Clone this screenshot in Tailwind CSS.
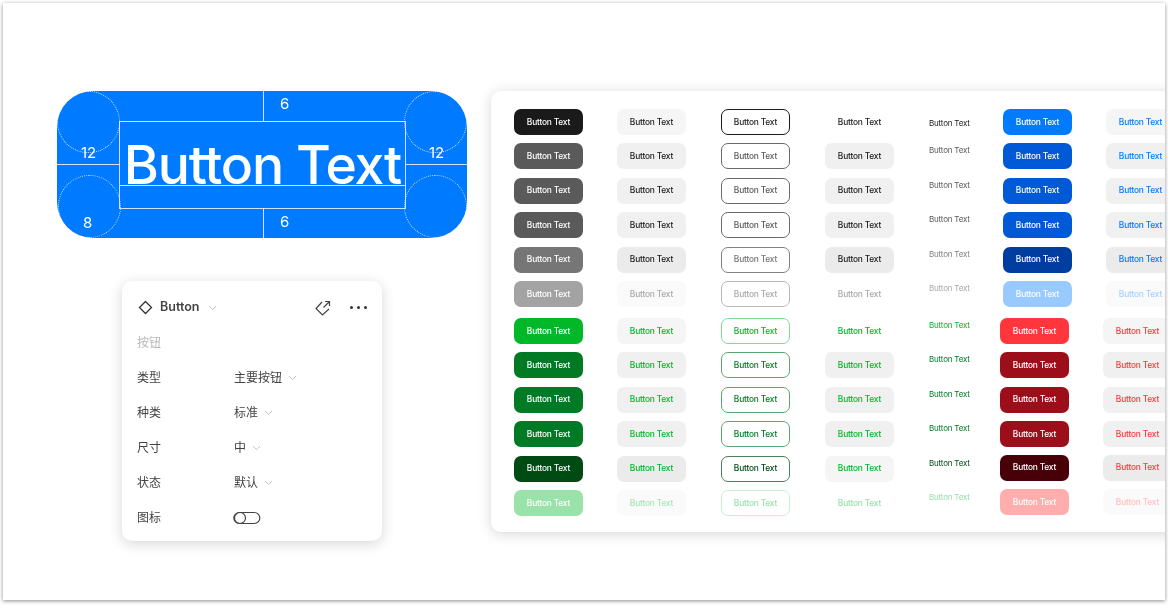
<!DOCTYPE html>
<html lang="zh"><head><meta charset="utf-8">
<script src="https://cdn.jsdelivr.net/npm/@tailwindcss/browser@4"></script>
</head>
<body class="bg-white">
<div class="h-[609px] w-[1168px] overflow-hidden pt-[3px] pl-[3px] font-['Inter','Noto_Sans_CJK_SC',sans-serif]">
<div class="flex h-[597px] w-[1162px] overflow-hidden bg-white pt-[88px] pl-[54px] shadow-[0_1px_4px_rgba(0,0,0,0.45)] blur-[0.45px]">

<!-- left column -->
<div class="flex w-[434px] flex-none flex-col">
  <div class="relative flex h-[147px] w-[410px] flex-none flex-col rounded-[36px] bg-[#007aff] text-white">
    <div class="flex h-[30px] justify-center pl-[2px]"><div class="w-px bg-white/80"></div></div>
    <div class="flex h-[87px] items-center">
      <div class="h-px w-[62px] flex-none bg-white/80"></div>
      <div class="relative flex h-[88px] w-[287px] flex-none justify-center border border-white/80 pt-[9px] text-[53.5px] leading-[68px] font-medium tracking-[-1.2px] whitespace-nowrap">Button Text
        <div class="absolute top-[63px] right-0 left-0 h-px bg-white/80"></div>
      </div>
      <div class="h-px flex-1 bg-white/80"></div>
    </div>
    <div class="flex h-[30px] justify-center pl-[2px]"><div class="w-px bg-white/80"></div></div>
    <div class="absolute top-0 left-0 h-[62px] w-[63px] rounded-full border border-dotted border-white/80"></div>
    <div class="absolute top-0 right-0 h-[62px] w-[63px] rounded-full border border-dotted border-white/80"></div>
    <div class="absolute bottom-0 left-[1px] h-[63px] w-[63px] rounded-full border border-dotted border-white/80"></div>
    <div class="absolute right-0 bottom-0 h-[63px] w-[63px] rounded-full border border-dotted border-white/80"></div>
    <span class="absolute top-[4px] left-[223px] text-[15px] leading-[18px]">6</span>
    <span class="absolute top-[122px] left-[223px] text-[15px] leading-[18px]">6</span>
    <span class="absolute top-[53px] left-[24px] text-[15px] leading-[18px]">12</span>
    <span class="absolute top-[53px] left-[372px] text-[15px] leading-[18px]">12</span>
    <span class="absolute top-[123px] left-[26px] text-[15px] leading-[18px]">8</span>
  </div>

  <div class="mt-[43px] ml-[65px] h-[260px] w-[260px] flex-none rounded-[10px] bg-white px-[15px] pt-[16.5px] text-[12px] text-[#444] shadow-[0_3px_14px_rgba(0,0,0,0.16)]">
    <div class="flex h-[20px] items-center">
      <svg class="mr-[7px] ml-[1px] h-[15px] w-[15px]" viewBox="0 0 15 15" fill="none" stroke="#333" stroke-width="1.3"><path d="M7.5 1.5 13.5 7.5 7.5 13.5 1.5 7.5Z"/></svg>
      <span class="text-[12.5px] font-semibold text-[#444]">Button</span>
      <svg class="ml-[9px] h-[6px] w-[9px]" viewBox="0 0 9 6" fill="none" stroke="#c4c4c4" stroke-width="1"><path d="M1 1 4.5 4.5 8 1"/></svg>
      <svg class="mr-[18px] ml-auto h-[18px] w-[18px]" viewBox="0 0 18 18" fill="none" stroke="#444" stroke-width="1.2"><path d="M8 3 2 9.5 8.5 16 15 10"/><path d="M9.5 8.5 15.5 2.5M11 2.5h4.5V7"/></svg>
      <div class="flex gap-[3.5px]"><i class="h-[3.5px] w-[3.5px] rounded-full bg-[#333]"></i><i class="h-[3.5px] w-[3.5px] rounded-full bg-[#333]"></i><i class="h-[3.5px] w-[3.5px] rounded-full bg-[#333]"></i></div>
    </div>
    <div class="mt-[15.5px] flex h-[20px] items-center text-[#b8b8b8]">按钮</div>
    <div class="mt-[15px] flex h-[20px] items-center"><span class="w-[97px]">类型</span>主要按钮<svg class="ml-[6px] h-[6px] w-[9px]" viewBox="0 0 9 6" fill="none" stroke="#c4c4c4" stroke-width="1"><path d="M1 1 4.5 4.5 8 1"/></svg></div>
    <div class="mt-[15px] flex h-[20px] items-center"><span class="w-[97px]">种类</span>标准<svg class="ml-[6px] h-[6px] w-[9px]" viewBox="0 0 9 6" fill="none" stroke="#c4c4c4" stroke-width="1"><path d="M1 1 4.5 4.5 8 1"/></svg></div>
    <div class="mt-[15px] flex h-[20px] items-center"><span class="w-[97px]">尺寸</span>中<svg class="ml-[6px] h-[6px] w-[9px]" viewBox="0 0 9 6" fill="none" stroke="#c4c4c4" stroke-width="1"><path d="M1 1 4.5 4.5 8 1"/></svg></div>
    <div class="mt-[15px] flex h-[20px] items-center"><span class="w-[97px]">状态</span>默认<svg class="ml-[6px] h-[6px] w-[9px]" viewBox="0 0 9 6" fill="none" stroke="#c4c4c4" stroke-width="1"><path d="M1 1 4.5 4.5 8 1"/></svg></div>
    <div class="mt-[15px] flex h-[20px] items-center"><span class="w-[96px]">图标</span>
      <svg class="h-[14px] w-[28px]" viewBox="0 0 28 14" fill="none" stroke="#444" stroke-width="1.2"><rect x="0.8" y="1.5" width="26" height="11" rx="5.5"/><circle cx="7" cy="7" r="5.5"/></svg>
    </div>
  </div>
</div>

<!-- buttons card -->
<div class="grid h-[441px] w-[720px] flex-none grid-cols-[103px_104px_104px_104px_74px_103px_69px] rounded-[10px] bg-white pt-[18px] pl-[23px] text-[8.4px] font-medium tracking-[-0.2px] shadow-[0_2px_14px_rgba(0,0,0,0.16)]">

  <div class="flex w-[69px] flex-col gap-[11px]">
    <div class="flex flex-col gap-[8.4px] text-white *:flex *:h-[26px] *:items-center *:justify-center *:rounded-[7px]">
      <div class="bg-[#1a1a1a]">Button Text</div><div class="bg-[#5a5a5a]">Button Text</div><div class="bg-[#5a5a5a]">Button Text</div><div class="bg-[#5a5a5a]">Button Text</div><div class="bg-[#767676]">Button Text</div><div class="bg-[#a3a3a3]">Button Text</div>
    </div>
    <div class="flex flex-col gap-[8.4px] text-white *:flex *:h-[26px] *:items-center *:justify-center *:rounded-[7px]">
      <div class="bg-[#00b828]">Button Text</div><div class="bg-[#007a24]">Button Text</div><div class="bg-[#007a24]">Button Text</div><div class="bg-[#007a24]">Button Text</div><div class="bg-[#004a14]">Button Text</div><div class="bg-[#99e2a9]">Button Text</div>
    </div>
  </div>

  <div class="flex w-[69px] flex-col gap-[11px]">
    <div class="flex flex-col gap-[8.4px] text-[#1a1a1a] *:flex *:h-[26px] *:items-center *:justify-center *:rounded-[7px]">
      <div class="bg-[#f5f5f5]">Button Text</div><div class="bg-[#f0f0f0]">Button Text</div><div class="bg-[#f0f0f0]">Button Text</div><div class="bg-[#f0f0f0]">Button Text</div><div class="bg-[#ebebeb]">Button Text</div><div class="bg-[#fafafa] text-[#a8a8a8]">Button Text</div>
    </div>
    <div class="flex flex-col gap-[8.4px] text-[#00b828] *:flex *:h-[26px] *:items-center *:justify-center *:rounded-[7px]">
      <div class="bg-[#f5f5f5]">Button Text</div><div class="bg-[#f0f0f0]">Button Text</div><div class="bg-[#f0f0f0]">Button Text</div><div class="bg-[#f0f0f0]">Button Text</div><div class="bg-[#ebebeb]">Button Text</div><div class="bg-[#fafafa] text-[#a6e6b4]">Button Text</div>
    </div>
  </div>

  <div class="flex w-[69px] flex-col gap-[11px]">
    <div class="flex flex-col gap-[8.4px] *:flex *:h-[26px] *:items-center *:justify-center *:rounded-[7px] *:border">
      <div class="border-[#1a1a1a] text-[#1a1a1a]">Button Text</div><div class="border-[#6a6a6a] text-[#5a5a5a]">Button Text</div><div class="border-[#6a6a6a] text-[#5a5a5a]">Button Text</div><div class="border-[#6a6a6a] text-[#5a5a5a]">Button Text</div><div class="border-[#808080] text-[#767676]">Button Text</div><div class="border-[#b8b8b8] text-[#a8a8a8]">Button Text</div>
    </div>
    <div class="flex flex-col gap-[8.4px] *:flex *:h-[26px] *:items-center *:justify-center *:rounded-[7px] *:border">
      <div class="border-[#80dc94] text-[#00b828]">Button Text</div><div class="border-[#5aa870] text-[#007a24]">Button Text</div><div class="border-[#5aa870] text-[#007a24]">Button Text</div><div class="border-[#5aa870] text-[#007a24]">Button Text</div><div class="border-[#4a7f5a] text-[#004a14]">Button Text</div><div class="border-[#c8f0d2] text-[#99e2a9]">Button Text</div>
    </div>
  </div>

  <div class="flex w-[69px] flex-col gap-[11px]">
    <div class="flex flex-col gap-[8.4px] text-[#1a1a1a] *:flex *:h-[26px] *:items-center *:justify-center *:rounded-[7px]">
      <div>Button Text</div><div class="bg-[#f0f0f0]">Button Text</div><div class="bg-[#f0f0f0]">Button Text</div><div class="bg-[#f0f0f0]">Button Text</div><div class="bg-[#ebebeb]">Button Text</div><div class="text-[#a8a8a8]">Button Text</div>
    </div>
    <div class="flex flex-col gap-[8.4px] text-[#00b828] *:flex *:h-[26px] *:items-center *:justify-center *:rounded-[7px]">
      <div>Button Text</div><div class="bg-[#f0f0f0]">Button Text</div><div class="bg-[#f0f0f0]">Button Text</div><div class="bg-[#f0f0f0]">Button Text</div><div class="bg-[#f5f5f5]">Button Text</div><div class="text-[#99e2a9]">Button Text</div>
    </div>
  </div>

  <div class="flex flex-col gap-[11px] text-[8px] font-normal">
    <div class="flex flex-col gap-[8.4px] *:h-[26px] *:pt-[2px] *:leading-[10px]">
      <div class="flex items-center text-[#1a1a1a]">Button Text</div><div class="text-[#5a5a5a]">Button Text</div><div class="text-[#5a5a5a]">Button Text</div><div class="text-[#5a5a5a]">Button Text</div><div class="text-[#808080]">Button Text</div><div class="text-[#a8a8a8]">Button Text</div>
    </div>
    <div class="flex flex-col gap-[8.4px] *:h-[26px] *:pt-[2px] *:leading-[10px]">
      <div class="text-[#00b828]">Button Text</div><div class="text-[#007a24]">Button Text</div><div class="text-[#007a24]">Button Text</div><div class="text-[#007a24]">Button Text</div><div class="text-[#004a14]">Button Text</div><div class="text-[#99e2a9]">Button Text</div>
    </div>
  </div>

  <div class="flex w-[69px] flex-col gap-[11px]">
    <div class="flex flex-col gap-[8.4px] text-white *:flex *:h-[26px] *:items-center *:justify-center *:rounded-[7px]">
      <div class="bg-[#007aff]">Button Text</div><div class="bg-[#0059d6]">Button Text</div><div class="bg-[#0059d6]">Button Text</div><div class="bg-[#0059d6]">Button Text</div><div class="bg-[#003da0]">Button Text</div><div class="bg-[#99caff]">Button Text</div>
    </div>
    <div class="-ml-[3px] flex w-[69px] flex-col gap-[8.4px] text-white *:flex *:h-[26px] *:items-center *:justify-center *:rounded-[7px]">
      <div class="bg-[#ff363b]">Button Text</div><div class="bg-[#9c0f1a]">Button Text</div><div class="bg-[#9c0f1a]">Button Text</div><div class="bg-[#9c0f1a]">Button Text</div><div class="-mt-[1px] bg-[#470008]">Button Text</div><div class="bg-[#ffadad]">Button Text</div>
    </div>
  </div>

  <div class="flex w-[69px] flex-col gap-[11px]">
    <div class="flex flex-col gap-[8.4px] text-[#007aff] *:flex *:h-[26px] *:items-center *:justify-center *:rounded-[7px]">
      <div class="bg-[#f5f5f5]">Button Text</div><div class="bg-[#f0f0f0]">Button Text</div><div class="bg-[#f0f0f0]">Button Text</div><div class="bg-[#f0f0f0]">Button Text</div><div class="bg-[#ebebeb]">Button Text</div><div class="bg-[#fafafa] text-[#a6d0ff]">Button Text</div>
    </div>
    <div class="-ml-[3px] flex w-[69px] flex-col gap-[8.4px] text-[#ff363b] *:flex *:h-[26px] *:items-center *:justify-center *:rounded-[7px]">
      <div class="bg-[#f5f5f5]">Button Text</div><div class="bg-[#f0f0f0]">Button Text</div><div class="bg-[#f0f0f0]">Button Text</div><div class="bg-[#f0f0f0]">Button Text</div><div class="-mt-[1px] bg-[#ebebeb]">Button Text</div><div class="bg-[#fafafa] text-[#ffc0c0]">Button Text</div>
    </div>
  </div>
</div>

</div>
</div>
</body></html>
